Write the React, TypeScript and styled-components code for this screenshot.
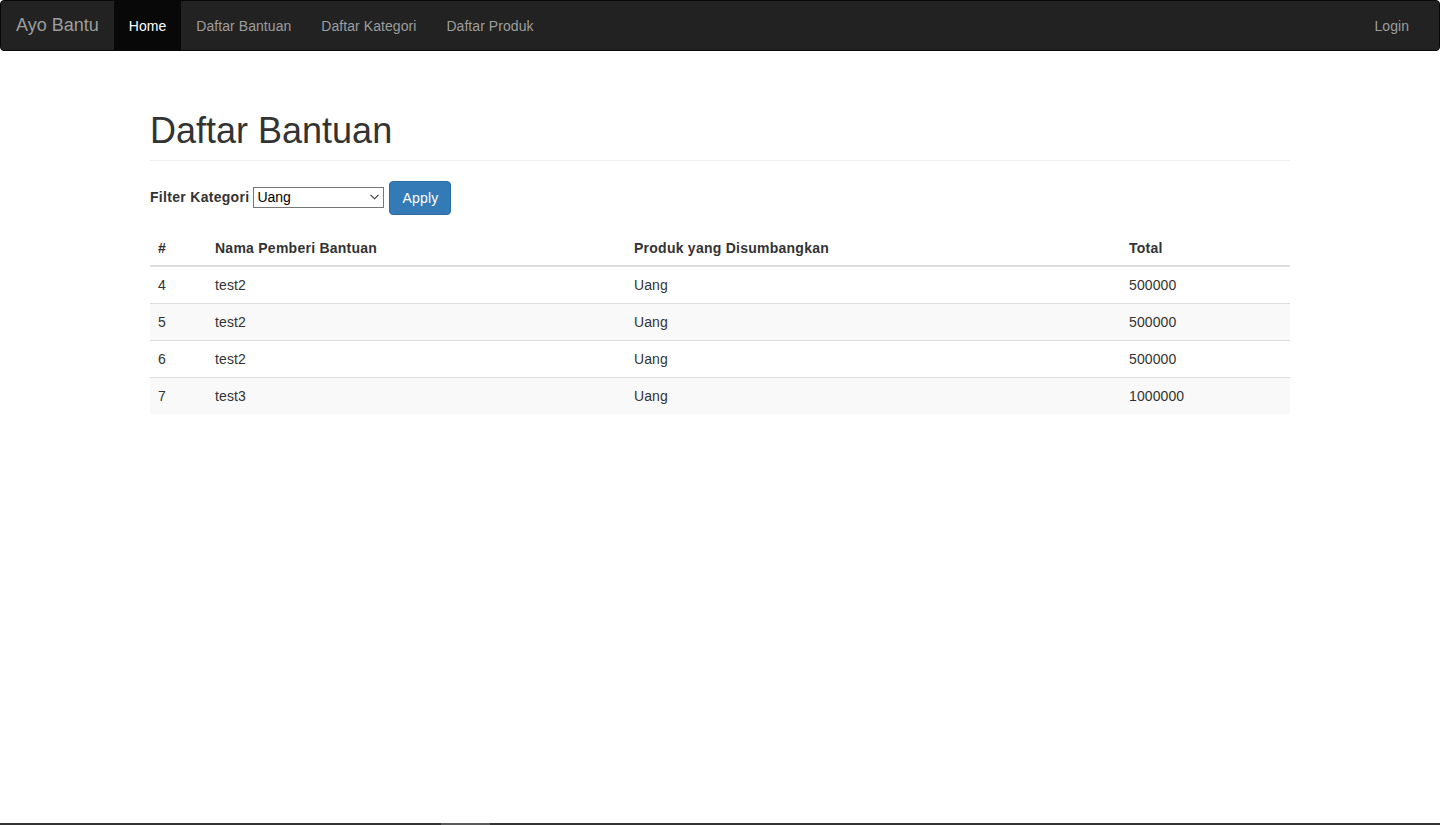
import styled, { createGlobalStyle } from "styled-components";

const GlobalStyle = createGlobalStyle`
  html, body {
    margin: 0;
    padding: 0;
    background: #fff;
  }
  body {
    font-family: "Liberation Sans", Arial, Helvetica, sans-serif;
    font-size: 14px;
    line-height: 1.42857143;
    color: #333;
  }
  * {
    box-sizing: border-box;
  }
`;

const Navbar = styled.nav`
  display: flex;
  align-items: stretch;
  justify-content: space-between;
  height: 51px;
  background-color: #222;
  border: 1px solid #080808;
  border-radius: 4px;
`;

const NavGroup = styled.div<{ $right?: boolean }>`
  display: flex;
  align-items: stretch;
  margin-right: ${(p) => (p.$right ? "15px" : "0")};
`;

const Brand = styled.a`
  display: flex;
  align-items: center;
  padding: 0 15px;
  font-size: 18px;
  color: #9d9d9d;
  text-decoration: none;
`;

const NavLink = styled.a<{ $active?: boolean }>`
  display: flex;
  align-items: center;
  padding: 0 15px;
  font-size: 14px;
  letter-spacing: 0.06px;
  color: ${(p) => (p.$active ? "#fff" : "#9d9d9d")};
  background-color: ${(p) => (p.$active ? "#080808" : "transparent")};
  text-decoration: none;
`;

const Container = styled.main`
  width: 1170px;
  margin: 0 auto;
  padding: 60px 15px 0 15px;
`;

const PageHeader = styled.div`
  border-bottom: 1px solid #eee;
  margin-bottom: 20px;
`;

const Title = styled.h1`
  margin: 0 0 9px 0;
  font-size: 36px;
  font-weight: 500;
  line-height: 1.1;
  color: #333;
`;

const FilterForm = styled.form`
  display: flex;
  align-items: center;
  gap: 4px;
  margin-bottom: 14px;
`;

const Label = styled.label`
  font-weight: bold;
  letter-spacing: 0.3px;
  margin-top: -2px;
`;

const SelectWrap = styled.div`
  position: relative;
  display: flex;
  margin-top: -1px;
`;

const Select = styled.select`
  appearance: none;
  width: 131px;
  height: 21px;
  font-family: inherit;
  font-size: 14px;
  line-height: 19px;
  color: #000;
  border: 1px solid #767676;
  border-radius: 0;
  background: #fff;
  padding: 0 20px 0 3px;
`;

const Chevron = styled.svg`
  position: absolute;
  right: 5px;
  top: 7px;
  width: 9px;
  height: 6px;
  pointer-events: none;
`;

const Button = styled.button`
  padding: 6px 12px;
  margin-left: 1px;
  font-family: inherit;
  font-size: 14px;
  line-height: 1.42857143;
  letter-spacing: 0.2px;
  color: #fff;
  background-color: #337ab7;
  border: 1px solid #2e6da4;
  border-radius: 4px;
`;

const Table = styled.table`
  width: 100%;
  border-collapse: collapse;
  border-spacing: 0;
`;

const Th = styled.th<{ $width: number }>`
  width: ${(p) => p.$width}px;
  padding: 9px 8px 7px 8px;
  text-align: left;
  font-weight: bold;
  letter-spacing: 0.25px;
  line-height: 20px;
  border-bottom: 2px solid #ddd;
`;

const Row = styled.tr<{ $striped: boolean }>`
  background-color: ${(p) => (p.$striped ? "#f9f9f9" : "#fff")};
`;

const Td = styled.td`
  padding: 8px;
  line-height: 20px;
  letter-spacing: 0.1px;
  border-top: 1px solid #ddd;
`;

const BottomBar = styled.div`
  position: fixed;
  left: 0;
  right: 0;
  bottom: 0;
  height: 2px;
  background: #333;
`;

const BottomThumb = styled.div`
  position: absolute;
  left: 441px;
  top: 0;
  width: 49px;
  height: 100%;
  background: #5a5a5a;
`;

const columns = [
  { label: "#", width: 57 },
  { label: "Nama Pemberi Bantuan", width: 419 },
  { label: "Produk yang Disumbangkan", width: 495 },
  { label: "Total", width: 169 },
];

const rows = [
  { id: 4, name: "test2", product: "Uang", total: "500000" },
  { id: 5, name: "test2", product: "Uang", total: "500000" },
  { id: 6, name: "test2", product: "Uang", total: "500000" },
  { id: 7, name: "test3", product: "Uang", total: "1000000" },
];

const App = () => {
  return (
    <>
      <GlobalStyle />
      <Navbar>
        <NavGroup>
          <Brand href="#">Ayo Bantu</Brand>
          <NavLink href="#" $active>
            Home
          </NavLink>
          <NavLink href="#">Daftar Bantuan</NavLink>
          <NavLink href="#">Daftar Kategori</NavLink>
          <NavLink href="#">Daftar Produk</NavLink>
        </NavGroup>
        <NavGroup $right>
          <NavLink href="#">Login</NavLink>
        </NavGroup>
      </Navbar>
      <Container>
        <PageHeader>
          <Title>Daftar Bantuan</Title>
        </PageHeader>
        <FilterForm onSubmit={(e) => e.preventDefault()}>
          <Label htmlFor="kategori">Filter Kategori</Label>
          <SelectWrap>
            <Select id="kategori" defaultValue="uang">
              <option value="uang">Uang</option>
            </Select>
            <Chevron viewBox="0 0 9 6">
              <path d="M0.5 0.8 L4.5 4.8 L8.5 0.8" fill="none" stroke="#333" strokeWidth="1.1" />
            </Chevron>
          </SelectWrap>
          <Button type="submit">Apply</Button>
        </FilterForm>
        <Table>
          <thead>
            <tr>
              {columns.map((c) => (
                <Th key={c.label} $width={c.width}>
                  {c.label}
                </Th>
              ))}
            </tr>
          </thead>
          <tbody>
            {rows.map((r, i) => (
              <Row key={r.id} $striped={i % 2 === 1}>
                <Td>{r.id}</Td>
                <Td>{r.name}</Td>
                <Td>{r.product}</Td>
                <Td>{r.total}</Td>
              </Row>
            ))}
          </tbody>
        </Table>
      </Container>
      <BottomBar>
        <BottomThumb />
      </BottomBar>
    </>
  );
};

export default App;
